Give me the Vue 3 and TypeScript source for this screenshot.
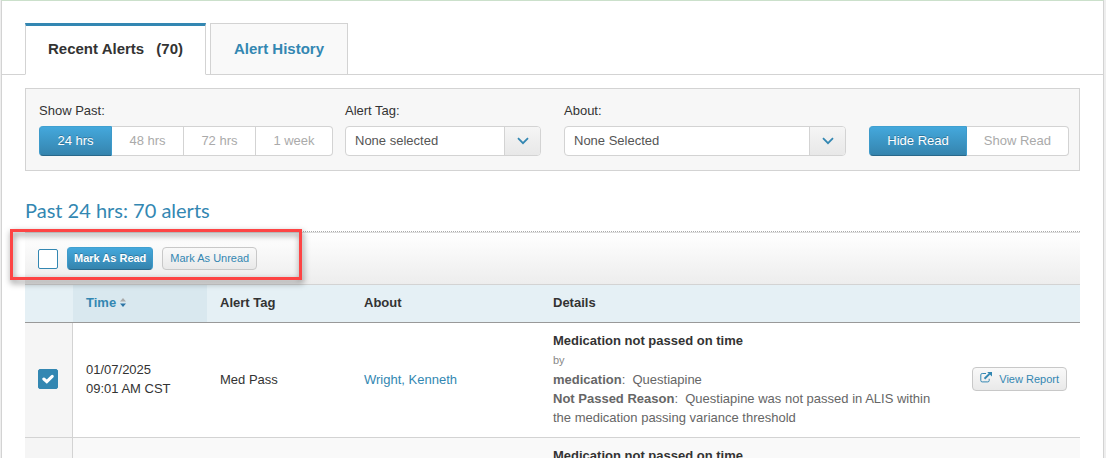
<script setup lang="ts">
import { computed, ref } from 'vue'

interface AlertRow {
  id: number
  date: string
  time: string
  tag: string
  about: string
  title: string
  medication: string
  reason: string
  checked: boolean
}

const periods = ['24 hrs', '48 hrs', '72 hrs', '1 week']
const period = ref('24 hrs')
const readModes = ['Hide Read', 'Show Read']
const readMode = ref('Hide Read')
const total = 70
const allChecked = ref(false)

const makeAlert = (id: number, checked: boolean): AlertRow => ({
  id,
  date: '01/07/2025',
  time: '09:01 AM CST',
  tag: 'Med Pass',
  about: 'Wright, Kenneth',
  title: 'Medication not passed on time',
  medication: 'Questiapine',
  reason: 'Questiapine was not passed in ALIS within the medication passing variance threshold',
  checked,
})
const alerts = ref<AlertRow[]>([makeAlert(1, true), makeAlert(2, false)])
const heading = computed(() => `Past ${period.value}: ${total} alerts`)
</script>

<template>
  <div class="page">
    <main class="panel">
      <nav class="tabs">
        <a href="#recent" class="tab active">Recent Alerts <span class="count">({{ total }})</span></a>
        <a href="#history" class="tab">Alert History</a>
      </nav>

      <div class="body">
        <section class="filters">
          <div class="past-field" role="group" aria-labelledby="past-label">
            <span id="past-label" class="label">Show Past:</span>
            <div class="segments">
              <button v-for="p in periods" :key="p" type="button" :class="{ on: p === period }" @click="period = p">{{ p }}</button>
            </div>
          </div>
          <div class="tag-field">
            <label class="label" for="tag">Alert Tag:</label>
            <div class="select">
              <select id="tag"><option>None selected</option></select>
              <span class="arrow"><svg width="12" height="8" viewBox="0 0 12 8"><path d="M1 1.2 6 6.2 11 1.2" /></svg></span>
            </div>
          </div>
          <div class="about-field">
            <label class="label" for="about">About:</label>
            <div class="select">
              <select id="about"><option>None Selected</option></select>
              <span class="arrow"><svg width="12" height="8" viewBox="0 0 12 8"><path d="M1 1.2 6 6.2 11 1.2" /></svg></span>
            </div>
          </div>
          <div class="segments" role="group" aria-label="Read alerts">
            <button v-for="m in readModes" :key="m" type="button" :class="{ on: m === readMode }" @click="readMode = m">{{ m }}</button>
          </div>
        </section>

        <h2>{{ heading }}</h2>

        <div class="toolbar">
          <span class="check">
            <input v-model="allChecked" type="checkbox" aria-label="Select all alerts">
            <svg viewBox="0 0 12 10"><path d="M1.8 5 4.8 7.6 10.2 2.4" /></svg>
          </span>
          <button type="button" class="small primary">Mark As Read</button>
          <button type="button" class="small">Mark As Unread</button>
          <div class="highlight"></div>
        </div>

        <table>
          <colgroup>
            <col class="c-check"><col class="c-time"><col class="c-tag"><col class="c-about"><col><col class="c-action">
          </colgroup>
          <thead>
            <tr>
              <th></th>
              <th class="sorted">
                <a href="#sort">Time
                  <svg width="6" height="9" viewBox="0 0 6 9"><path class="up" d="M0 3.5 3 0 6 3.5z" /><path class="down" d="M0 5.5h6L3 9z" /></svg>
                </a>
              </th>
              <th>Alert Tag</th>
              <th>About</th>
              <th>Details</th>
              <th></th>
            </tr>
          </thead>
          <tbody>
            <tr v-for="a in alerts" :key="a.id">
              <td class="pick">
                <span class="check">
                  <input v-model="a.checked" type="checkbox" :aria-label="`Select alert ${a.id}`">
                  <svg viewBox="0 0 12 10"><path d="M1.8 5 4.8 7.6 10.2 2.4" /></svg>
                </span>
              </td>
              <td>{{ a.date }}<br>{{ a.time }}</td>
              <td>{{ a.tag }}</td>
              <td><a href="#resident">{{ a.about }}</a></td>
              <td class="details">
                <h3>{{ a.title }}</h3>
                <p class="by">by</p>
                <p><b>medication</b>:&nbsp; {{ a.medication }}</p>
                <p><b>Not Passed Reason</b>:&nbsp; {{ a.reason }}</p>
              </td>
              <td class="action">
                <button type="button" class="small">
                  <svg width="12" height="11" viewBox="0 0 12 11">
                    <path class="box" d="M6 1.5H2.2Q.8 1.5.8 2.9v5.6q0 1.4 1.4 1.4h5.6q1.4 0 1.4-1.4V6.8" />
                    <path class="stem" d="M4.5 6.8 9.5 1.9" />
                    <path class="head" d="M7.2 0H12v4.6z" />
                  </svg>
                  View Report
                </button>
              </td>
            </tr>
          </tbody>
        </table>
      </div>
    </main>
  </div>
</template>

<style>
body {
  margin: 0;
  background: #eee;
}
</style>

<style scoped>
* {
  box-sizing: border-box;
}
.page {
  height: 100vh;
  overflow: hidden;
  padding: 0 2px 0 1px;
  font: 13px/19px "Liberation Sans", Arial, sans-serif;
  color: #333;
}
.panel {
  min-height: 100%;
  background: #fff;
  border: 1px solid #d3d3d3;
  border-top-color: #cbe0cb;
  border-bottom: 0;
}
button,
select {
  font: inherit;
  margin: 0;
}
a {
  color: #3387b2;
  text-decoration: none;
}
.tabs {
  display: flex;
  gap: 4px;
  padding: 22px 23px 0;
  border-bottom: 1px solid #d3d3d3;
}
.tab {
  height: 52px;
  margin-bottom: -1px;
  padding: 0 23px;
  border: 1px solid #d3d3d3;
  background: #f9f9f9;
  font-size: 15px;
  font-weight: bold;
  line-height: 50px;
}
.tab.active {
  padding: 0 22px;
  border-top: 3px solid #3387b2;
  border-bottom-color: #fff;
  background: #fff;
  color: #333;
  line-height: 46px;
}
.count {
  margin-left: 8px;
}
.body {
  padding: 13px 23px 0;
}
.filters {
  display: flex;
  align-items: flex-end;
  padding: 12px 10px 14px 13px;
  border: 1px solid #d3d3d3;
  background: #f7f7f7;
}
.label {
  display: block;
  margin-bottom: 6px;
}
.past-field {
  width: 294px;
}
.tag-field {
  width: 196px;
  margin-left: 12px;
}
.about-field {
  flex: 1;
  margin: 0 23px;
}
.segments {
  display: flex;
  height: 30px;
}
.segments button {
  flex: 1 1 auto;
  padding: 0 17px 2px;
  border: 1px solid #d3d3d3;
  border-left-width: 0;
  background: #fff;
  color: #aaa;
}
.segments button:first-child {
  border-left-width: 1px;
  border-radius: 4px 0 0 4px;
}
.segments button:last-child {
  border-radius: 0 4px 4px 0;
}
.segments button.on,
.small.primary {
  border-color: #40a0d0 #3d9aca #29688a;
  background: linear-gradient(#44a8dc, #3584ae);
  color: #fff;
  text-shadow: 0 -1px 0 rgba(0, 0, 0, 0.25);
}
.select {
  display: grid;
  grid-template-columns: 1fr 36px;
  height: 30px;
  border: 1px solid #d3d3d3;
  border-radius: 4px;
  background: #fff;
  overflow: hidden;
}
.select select {
  grid-area: 1 / 1 / 2 / 3;
  width: 100%;
  padding: 0 9px 2px;
  border: 0;
  background: transparent;
  color: #555;
  appearance: none;
}
.arrow {
  grid-area: 1 / 2;
  display: grid;
  place-items: center;
  border-left: 1px solid #d3d3d3;
  background: linear-gradient(#f5f5f5, #e8e8e8);
  pointer-events: none;
}
.arrow path {
  fill: none;
  stroke: #3387b2;
  stroke-width: 1.8;
}
h2 {
  margin: 0;
  padding: 24px 0 6px;
  border-bottom: 1px dotted #aaa;
  font: 20px/30px Lato, sans-serif;
  color: #3387b2;
}
.toolbar {
  position: relative;
  display: flex;
  align-items: center;
  height: 53px;
  padding: 0 13px;
  border-top: 1px solid #ddd;
  border-bottom: 1px solid #d3d3d3;
  background: linear-gradient(#fff, #ededed);
}
.highlight {
  position: absolute;
  top: -4px;
  left: -15px;
  width: 292px;
  height: 51px;
  border: 3px solid #fd4444;
  filter: drop-shadow(1px 3px 3px rgba(0, 0, 0, 0.5));
  pointer-events: none;
}
.check {
  display: inline-grid;
  width: 20px;
  height: 20px;
  vertical-align: middle;
}
.check input {
  grid-area: 1 / 1;
  width: 20px;
  height: 20px;
  margin: 0;
  border: 1px solid #3387b2;
  border-radius: 2px;
  background: #fff;
  appearance: none;
}
.check input:checked {
  background: #3387b2;
}
.check svg {
  grid-area: 1 / 1;
  place-self: center;
  width: 12px;
  height: 10px;
  pointer-events: none;
}
.check path {
  fill: none;
  stroke: #fff;
  stroke-width: 3;
  stroke-linecap: round;
}
.check input:not(:checked) + svg {
  visibility: hidden;
}
.small {
  height: 24px;
  padding: 0 7px;
  border: 1px solid #c8c8c8;
  border-radius: 4px;
  background: linear-gradient(#f9f9f9, #e9e9e9);
  color: #3387b2;
  font-size: 11px;
  white-space: nowrap;
}
.toolbar .small {
  height: 23px;
  margin-left: 9px;
}
.small.primary {
  padding: 0 6px;
  font-weight: bold;
}
table {
  width: 100%;
  border-collapse: separate;
  border-spacing: 0;
  table-layout: fixed;
}
.c-check {
  width: 48px;
}
.c-time {
  width: 134px;
}
.c-tag {
  width: 144px;
}
.c-about {
  width: 189px;
}
.c-action {
  width: 132px;
}
th {
  height: 38px;
  padding: 0 13px 2px;
  border-bottom: 1px solid #999;
  background: #e5f0f5;
  text-align: left;
}
.sorted {
  background: #d9e8ef;
}
.up {
  fill: #aaa;
}
.down {
  fill: #2c74a5;
}
td {
  padding: 8px 13px 10px;
  border-bottom: 1px solid #d3d3d3;
}
tbody tr:nth-child(even) {
  background: #f9f9f9;
}
td.pick {
  border-right: 1px solid #d3d3d3;
  background: #f5f5f5;
}
.details {
  padding-right: 0;
  color: #666;
}
.details h3,
.details p {
  margin: 0;
  font-size: 13px;
  line-height: 19px;
}
.details h3 {
  color: #333;
}
.details .by {
  font-size: 11px;
  line-height: 20px;
  color: #888;
}
.action {
  text-align: right;
}
.action svg {
  margin-right: 4px;
}
.box,
.stem {
  fill: none;
  stroke: #3387b2;
}
.stem {
  stroke-width: 2;
}
.head {
  fill: #3387b2;
}
</style>
